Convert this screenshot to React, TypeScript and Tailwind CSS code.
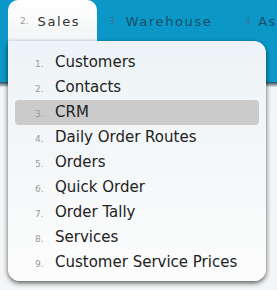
import React from "react";

const items = [
  "Customers",
  "Contacts",
  "CRM",
  "Daily Order Routes",
  "Orders",
  "Quick Order",
  "Order Tally",
  "Services",
  "Customer Service Prices",
];

export default function App() {
  return (
    <div
      className="relative w-[277px] h-[290px] overflow-hidden bg-[#f3f5f6]"
      style={{ fontFamily: '"DejaVu Sans", Verdana, sans-serif' }}
    >
      <div className="h-[82px] bg-[#0b98c9]">
        <div className="flex items-end h-[41px] pl-[8px]">
          <div className="w-[89px] h-[41px] rounded-t-[10px] bg-gradient-to-b from-white to-[#f2f4f5] flex items-center pl-[12px] pt-[3px]">
            <span className="text-[9px] text-[#999] mr-[9px]">2.</span>
            <span className="text-[13px] tracking-[1.6px] text-[#333]">Sales</span>
          </div>
          <div className="flex items-center h-[41px] pl-[12px] pt-[3px]">
            <span className="text-[9px] text-[#3a7190] mr-[11px]">3</span>
            <span className="text-[13px] tracking-[1.6px] text-[#1b4d66]">Warehouse</span>
          </div>
          <div className="flex items-center h-[41px] pl-[33px] pt-[3px]">
            <span className="text-[9px] text-[#3a7190] mr-[7px]">4</span>
            <span className="text-[13px] tracking-[1.6px] text-[#1b4d66]">As</span>
          </div>
        </div>
      </div>
      <div className="h-[5px] bg-gradient-to-b from-[#274a5a] to-[#e6e9ea]" />

      <div className="absolute left-[8px] top-[41px] w-[258px] h-[240px] rounded-b-[12px] rounded-tr-[12px] bg-gradient-to-b from-[#edf3f6] to-[#fcfcfc] shadow-[0_2px_5px_rgba(0,0,0,0.65)] pt-[9px] px-[7px]">
        <div className="flex flex-col">
          {items.map((it, i) => (
            <div
              key={it}
              className={
                "flex items-baseline h-[25px] pl-[20px] rounded-[4px] " +
                (i === 2 ? "bg-[#cbcbcb]" : "")
              }
            >
              <span className="w-[20px] text-[9px] text-[#999]">{i + 1}.</span>
              <span className="text-[15px] leading-[25px] text-[#222]">{it}</span>
            </div>
          ))}
        </div>
      </div>
    </div>
  );
}
